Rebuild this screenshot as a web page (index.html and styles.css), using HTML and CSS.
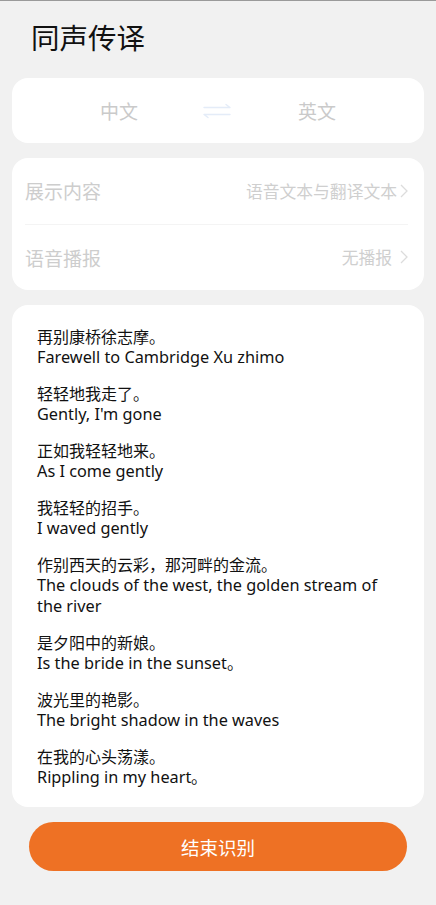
FILE: index.html
```html
<!DOCTYPE html>
<html lang="zh-CN">
<head>
    <meta charset="UTF-8">
    <meta name="viewport" content="width=device-width, initial-scale=1.0">
    <title>同声传译</title>
    <link rel="stylesheet" href="styles.css">
</head>
<body>
    <h1 class="title">同声传译</h1>

    <div class="card lang-card">
        <span class="lang">中文</span>
        <svg class="swap" width="30" height="16" viewBox="0 0 30 16">
            <path d="M2 4.5 H28 L24 1.5" fill="none" stroke="#e4ecf8" stroke-width="1.4" stroke-linecap="round" stroke-linejoin="round"/>
            <path d="M28 11.5 H2 L6 14.5" fill="none" stroke="#e4ecf8" stroke-width="1.4" stroke-linecap="round" stroke-linejoin="round"/>
        </svg>
        <span class="lang">英文</span>
    </div>

    <div class="card setting-card">
        <div class="setting-row">
            <span class="setting-name">展示内容</span>
            <span class="setting-value">语音文本与翻译文本
                <svg class="chevron" width="8" height="14" viewBox="0 0 8 14"><path d="M1 1 L7 7 L1 13" fill="none" stroke="#dcdcdc" stroke-width="1.3"/></svg>
            </span>
        </div>
        <div class="setting-row">
            <span class="setting-name">语音播报</span>
            <span class="setting-value wide">无播报
                <svg class="chevron" width="8" height="14" viewBox="0 0 8 14"><path d="M1 1 L7 7 L1 13" fill="none" stroke="#dcdcdc" stroke-width="1.3"/></svg>
            </span>
        </div>
    </div>

    <div class="card text-card" id="textList"></div>

    <button class="end-btn">结束识别</button>

    <script>
        // 识别结果
        const lines = [
            ['再别康桥徐志摩。', 'Farewell to Cambridge Xu zhimo'],
            ['轻轻地我走了。', 'Gently, I\'m gone'],
            ['正如我轻轻地来。', 'As I come gently'],
            ['我轻轻的招手。', 'I waved gently'],
            ['作别西天的云彩，那河畔的金流。', 'The clouds of the west, the golden stream of the river'],
            ['是夕阳中的新娘。', 'Is the bride in the sunset。'],
            ['波光里的艳影。', 'The bright shadow in the waves'],
            ['在我的心头荡漾。', 'Rippling in my heart。']
        ];

        const textList = document.getElementById('textList');
        lines.forEach(item => {
            const block = document.createElement('div');
            block.className = 'text-item';
            block.innerHTML = `
                <p class="src">${item[0]}</p>
                <p class="dst">${item[1]}</p>
            `;
            textList.appendChild(block);
        });
    </script>
</body>
</html>
```

FILE: styles.css
```css
html {
    background-color: #f1f1f1;
}
body {
    margin: 0;
    padding: 0 12px 20px;
    border-top: 1px solid #9a9a9a;
    font-family: "Noto Sans CJK SC", sans-serif;
    color: #111;
}
.title {
    margin: 0;
    padding: 17px 0 0 19px;
    height: 60px;
    box-sizing: border-box;
    font-size: 28.5px;
    font-weight: 400;
    line-height: 38px;
}
.card {
    background-color: #fff;
    border-radius: 16px;
}
.lang-card {
    margin-top: 17px;
    height: 65px;
    display: flex;
    align-items: center;
    justify-content: space-between;
    padding: 0 88px;
}
.lang {
    font-size: 19px;
    color: #cacaca;
}
.swap {
    display: block;
    margin-right: 2px;
}
.setting-card {
    margin-top: 15px;
    padding: 0 16px 0 13px;
}
.setting-row {
    height: 65.5px;
    display: flex;
    align-items: center;
    justify-content: space-between;
}
.setting-row + .setting-row {
    border-top: 1px solid #f4f4f4;
}
.setting-name {
    font-size: 19px;
    color: #cdcdcd;
}
.setting-value {
    display: flex;
    align-items: center;
    gap: 3px;
    font-size: 16.8px;
    color: #cfcfcf;
}
.setting-value.wide {
    gap: 8px;
}
.chevron {
    display: block;
}
.text-card {
    margin-top: 15px;
    padding: 20px 25px 19px;
}
.text-item + .text-item {
    margin-top: 14px;
}
.text-item p {
    margin: 0;
}
.src {
    font-size: 16px;
    line-height: 22px;
}
.dst {
    font-family: "Noto Sans", sans-serif;
    font-size: 16.3px;
    line-height: 21px;
}
.end-btn {
    display: block;
    width: 378px;
    height: 49px;
    margin: 15px auto 0;
    border: none;
    border-radius: 25px;
    background-color: #ee7124;
    color: #fff;
    font-family: "Noto Sans CJK SC", sans-serif;
    font-size: 18.5px;
    font-weight: 400;
    cursor: pointer;
}
```
